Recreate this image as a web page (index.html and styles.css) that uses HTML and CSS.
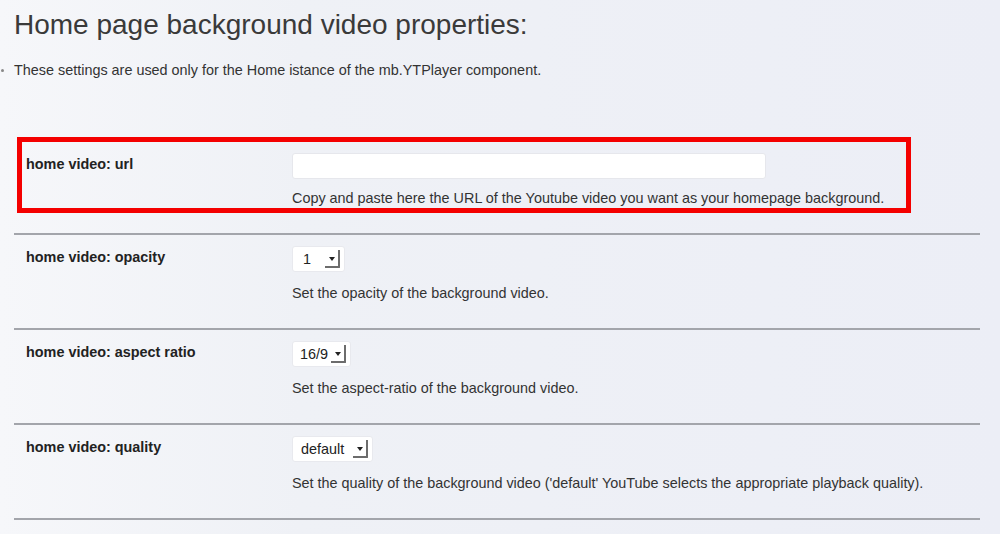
FILE: index.html
```html
<!DOCTYPE html>
<html>
<head>
<meta charset="utf-8">
<link rel="stylesheet" href="styles.css">
</head>
<body>
<div class="page">
  <h1 class="title">Home page background video properties:</h1>
  <p class="intro"><span class="dot"></span>These settings are used only for the Home istance of the mb.YTPlayer component.</p>

  <div class="rows">
    <div class="row highlight">
      <div class="label">home video: url</div>
      <div class="field">
        <div class="input"></div>
        <div class="help">Copy and paste here the URL of the Youtube video you want as your homepage background.</div>
      </div>
    </div>
    <div class="row">
      <div class="label">home video: opacity</div>
      <div class="field">
        <div class="select"><span class="val v1">1</span><span class="btn"><span class="arrow"></span></span></div>
        <div class="help">Set the opacity of the background video.</div>
      </div>
    </div>
    <div class="row">
      <div class="label">home video: aspect ratio</div>
      <div class="field">
        <div class="select"><span class="val v2">16/9</span><span class="btn"><span class="arrow"></span></span></div>
        <div class="help">Set the aspect-ratio of the background video.</div>
      </div>
    </div>
    <div class="row">
      <div class="label">home video: quality</div>
      <div class="field">
        <div class="select"><span class="val v3">default</span><span class="btn"><span class="arrow"></span></span></div>
        <div class="help">Set the quality of the background video ('default' YouTube selects the appropriate playback quality).</div>
      </div>
    </div>
  </div>
</div>
</body>
</html>
```
FILE: styles.css
```css
html, body {
  margin: 0;
  padding: 0;
}
body {
  width: 1000px;
  height: 534px;
  overflow: hidden;
  background: linear-gradient(90deg, #f6f7fa 0%, #eff1f6 30%, #eceef6 100%);
  font-family: "Liberation Sans", Arial, sans-serif;
  color: #333;
}
.page {
  padding: 0 20px 0 14px;
}
.title {
  margin: 0;
  padding-top: 9px;
  font-size: 28px;
  font-weight: normal;
  line-height: 32px;
  color: #3a3a3a;
}
.intro {
  position: relative;
  margin: 21px 0 0;
  font-size: 14.4px;
  line-height: 17px;
  color: #333;
}
.dot {
  position: absolute;
  left: -13px;
  top: 7px;
  width: 3px;
  height: 3px;
  border-radius: 50%;
  background: #888;
}
.rows {
  margin-top: 58px;
}
.row {
  display: flex;
  height: 93px;
  border-bottom: 2px solid #a3a5ab;
  box-sizing: content-box;
}
.row.highlight {
  margin: 0 69px 0 3px;
  height: 66px;
  border: 5px solid #f40000;
  margin-bottom: 20px;
}
.row.highlight + .row {
  border-top: 2px solid #a3a5ab;
}
.label {
  width: 266px;
  padding: 14px 0 0 12px;
  font-size: 14.4px;
  line-height: 17px;
  font-weight: bold;
  color: #222;
  flex: none;
}
.highlight .label {
  padding: 14px 0 0 4px;
}
.field {
  padding-top: 11px;
}
.input {
  width: 472px;
  height: 24px;
  background: #fff;
  border: 1px solid #e6e7ec;
  border-radius: 3px;
}
.help {
  margin-top: 13px;
  font-size: 14.4px;
  line-height: 17px;
  color: #333;
}
.highlight .help {
  margin-top: 11px;
}
.select {
  display: inline-flex;
  align-items: center;
  height: 26px;
  background: #fff;
  border: 1px solid #e8e9ee;
  border-radius: 3px;
  box-sizing: border-box;
  padding: 0 4px 0 8px;
}
.val {
  font-size: 14.4px;
  color: #222;
}
.v1 { width: 22px; margin-left: 2px; }
.v2 { width: 31px; margin-left: -1px; }
.v3 { width: 52px; }
.btn {
  position: relative;
  width: 15px;
  height: 18px;
  box-sizing: border-box;
  border-right: 2px solid #6c6c6c;
  border-bottom: 2px solid #6c6c6c;
  border-bottom-right-radius: 1px;
}
.arrow {
  position: absolute;
  left: 4px;
  top: 7px;
  width: 0;
  height: 0;
  border-left: 3px solid transparent;
  border-right: 3px solid transparent;
  border-top: 4px solid #222;
}
```
